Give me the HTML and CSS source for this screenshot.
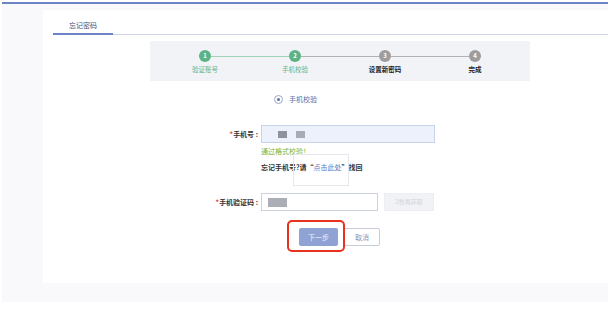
FILE: index.html
```html
<!DOCTYPE html>
<html>

<head>
    <title>忘记密码</title>
    <link rel="stylesheet" href="styles.css">
</head>

<body>
    <div class="frame">
        <div class="card">
            <div class="tabs">
                <div class="tab active">忘记密码</div>
            </div>

            <div class="steps">
                <div class="step-track">
                    <span class="dot done">1</span>
                    <span class="line done"></span>
                    <span class="dot done">2</span>
                    <span class="line"></span>
                    <span class="dot">3</span>
                    <span class="line"></span>
                    <span class="dot">4</span>
                </div>
                <div class="step-labels">
                    <span class="done">验证账号</span>
                    <span class="done">手机校验</span>
                    <span>设置新密码</span>
                    <span>完成</span>
                </div>
            </div>

            <div class="form">
                <div class="radio-row">
                    <span class="radio"><span class="radio-dot"></span></span>
                    <span class="radio-text">手机校验</span>
                </div>

                <div class="row phone-row">
                    <label class="label"><em>*</em>手机号 :</label>
                    <div class="input phone-input">
                        <span class="mask"></span>
                        <span class="mask light"></span>
                    </div>
                </div>
                <div class="field-note ok">通过格式校验！</div>
                <div class="field-note forgot">
                    忘记手机号?请“<a href="#">点击此处</a>”找回
                    <span class="tip"></span>
                </div>

                <div class="row code-row">
                    <label class="label"><em>*</em>手机验证码 :</label>
                    <div class="input code-input">
                        <span class="mask code"></span>
                    </div>
                    <button class="btn-code" disabled>2秒再获取</button>
                </div>

                <div class="actions">
                    <div class="next-wrap">
                        <button class="btn btn-next">下一步</button>
                        <span class="highlight"></span>
                    </div>
                    <button class="btn btn-cancel">取消</button>
                </div>
            </div>
        </div>
    </div>
</body>

</html>
```

FILE: styles.css
```css
body {
    margin: 0;
    background-color: #fff;
    font-family: "Noto Sans CJK SC", "Noto Sans", sans-serif;
    color: #333;
}

.frame {
    margin: 2px 1px 0 2px;
    border-top: 2px solid #6d84c4;
    background-color: #f9f8fa;
    height: 279px;
    padding: 6px 0 13px 41px;
}

.card {
    background-color: #fff;
    height: 273px;
}

/* tab bar */
.tabs {
    margin-left: 10px;
    border-bottom: 1px solid #cdd5e4;
    display: flex;
}

.tab {
    width: 60px;
    text-align: center;
    font-size: 7px;
    line-height: 10px;
    padding: 10px 0 3px;
    color: #3f4e72;
}

.tab.active {
    border-bottom: 2px solid #6d84c4;
    margin-bottom: -1px;
}

/* steps */
.steps {
    margin: 6px 0 0 107px;
    width: 380px;
    height: 40px;
    background-color: #f2f3f6;
}

.step-track {
    display: flex;
    align-items: center;
    padding: 9px 0 0 49px;
}

.dot {
    width: 12px;
    height: 12px;
    border-radius: 50%;
    background-color: #9d9d9d;
    color: #fff;
    font-size: 6px;
    font-weight: bold;
    line-height: 12px;
    text-align: center;
    flex-shrink: 0;
}

.dot.done {
    background-color: #5cb386;
}

.line {
    width: 78px;
    height: 1px;
    background-color: #b3b3b3;
}

.line.done {
    background-color: #9fd3b6;
}

.step-labels {
    display: grid;
    grid-template-columns: repeat(4, 90px);
    margin: 3px 0 0 10px;
    font-size: 6.5px;
    line-height: 8px;
    text-align: center;
    color: #222;
    font-weight: bold;
}

.step-labels .done {
    color: #5fb68a;
    font-weight: normal;
}

/* form */
.form {
    margin-left: 115px;
}

.radio-row {
    display: flex;
    align-items: center;
    margin-top: 13px;
    padding-left: 116px;
    height: 10px;
}

.radio {
    width: 7px;
    height: 7px;
    border: 1px solid #9aa7c8;
    border-radius: 50%;
    display: flex;
    align-items: center;
    justify-content: center;
}

.radio-dot {
    width: 3px;
    height: 3px;
    border-radius: 50%;
    background-color: #5b6fa6;
}

.radio-text {
    margin-left: 6px;
    font-size: 7px;
    color: #5b6fa6;
}

.row {
    display: flex;
    align-items: center;
}

.label {
    width: 100px;
    padding-right: 3px;
    text-align: right;
    font-size: 7px;
    font-weight: bold;
    color: #333;
}

.label em {
    font-style: normal;
    color: #e8463b;
}

.input {
    height: 16px;
    border: 1px solid #cdd3de;
    background-color: #fff;
    display: flex;
    align-items: center;
}

.phone-row {
    margin-top: 21px;
}

.phone-input {
    width: 172px;
    background-color: #edf1fb;
    border-color: #c8d2ea;
}

.mask {
    width: 9px;
    height: 7px;
    background-color: #8d939c;
    margin-left: 16px;
}

.mask.light {
    margin-left: 9px;
    background-color: #a7abb3;
}

.mask.code {
    width: 19px;
    height: 9px;
    margin-left: 6px;
    background-color: #abaeb5;
}

.field-note {
    margin-left: 103px;
    font-size: 7px;
    line-height: 10px;
}

.ok {
    margin-top: 3px;
    color: #7ab33e;
}

.forgot {
    margin-top: 6px;
    position: relative;
    font-weight: bold;
    color: #333;
}

.forgot a {
    color: #5b75c0;
    text-decoration: none;
    font-weight: normal;
}

.tip {
    position: absolute;
    left: 32px;
    top: -8px;
    width: 54px;
    height: 30px;
    border: 1px solid #e6e7ec;
}

.code-row {
    margin-top: 21px;
}

.code-input {
    width: 115px;
}

.btn-code {
    display: block;
    margin-left: 6px;
    width: 50px;
    height: 18px;
    border: 1px solid #eceef2;
    background-color: #f1f2f5;
    color: #d2d4da;
    font-family: inherit;
    font-size: 6px;
    line-height: 16px;
    padding: 0;
}

.actions {
    display: flex;
    align-items: flex-start;
    margin-top: 17px;
    padding-left: 141px;
}

.next-wrap {
    position: relative;
    display: flex;
}

.btn {
    display: block;
    height: 18px;
    font-family: inherit;
    font-size: 7px;
    line-height: 16px;
    padding: 0;
    border-radius: 2px;
}

.btn-next {
    width: 39px;
    border: none;
    background-color: #8ea3d3;
    color: #eef1fa;
}

.btn-cancel {
    margin-left: 6px;
    width: 36px;
    border: 1px solid #c7ccd6;
    background-color: #fff;
    color: #8796b8;
}

.highlight {
    position: absolute;
    left: -12px;
    top: -8px;
    width: 54px;
    height: 28px;
    border: 2px solid #e8321e;
    border-radius: 5px;
}
```
